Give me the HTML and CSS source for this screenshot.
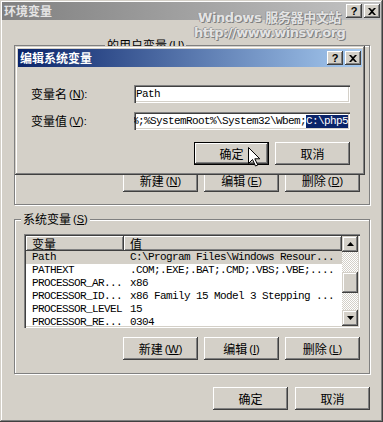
FILE: index.html
```html
<!DOCTYPE html>
<html>
<head>
<meta charset="utf-8">
<link rel="stylesheet" href="styles.css">
</head>
<body>
<div class="window">
  <div class="titlebar inactive">
    <span class="title">环境变量</span>
    <span class="tb-btns">
      <span class="tb-btn help">?</span>
      <span class="tb-btn"><svg width="8" height="7" viewBox="0 0 8 7"><path d="M0 0h2l2 2 2-2h2L5 3.5 8 7H6L4 5 2 7H0l3-3.5z" fill="#000"/></svg></span>
    </span>
  </div>
  <div class="content">
    <fieldset class="group user">
      <legend>的用户变量<span class="mn">(<u>U</u>)</span></legend>
      <div class="group-body">
        <div class="list blank"></div>
        <div class="btnrow">
          <button class="btn">新建<span class="mn">(<u>N</u>)</span></button>
          <button class="btn">编辑<span class="mn">(<u>E</u>)</span></button>
          <button class="btn">删除<span class="mn">(<u>D</u>)</span></button>
        </div>
      </div>
    </fieldset>
    <fieldset class="group sys">
      <legend>系统变量<span class="mn">(<u>S</u>)</span></legend>
      <div class="group-body">
        <div class="list">
          <div class="list-main">
            <div class="lv-head"><div class="hc c1">变量</div><div class="hc c2">值</div></div>
            <div class="lv-row sel"><span class="c1">Path</span><span class="c2">C:\Program Files\Windows Resour...</span></div>
            <div class="lv-row"><span class="c1">PATHEXT</span><span class="c2">.COM;.EXE;.BAT;.CMD;.VBS;.VBE;....</span></div>
            <div class="lv-row"><span class="c1">PROCESSOR_AR...</span><span class="c2">x86</span></div>
            <div class="lv-row"><span class="c1">PROCESSOR_ID...</span><span class="c2">x86 Family 15 Model 3 Stepping ...</span></div>
            <div class="lv-row"><span class="c1">PROCESSOR_LEVEL</span><span class="c2">15</span></div>
            <div class="lv-row"><span class="c1">PROCESSOR_RE...</span><span class="c2">0304</span></div>
          </div>
          <div class="vscroll">
            <div class="sb-btn"><svg width="7" height="4" viewBox="0 0 7 4"><path d="M3.5 0L7 4H0z" fill="#000"/></svg></div>
            <div class="sb-track"><div class="sb-thumb"></div></div>
            <div class="sb-btn"><svg width="7" height="4" viewBox="0 0 7 4"><path d="M0 0h7L3.5 4z" fill="#000"/></svg></div>
          </div>
        </div>
        <div class="btnrow">
          <button class="btn">新建<span class="mn">(<u>W</u>)</span></button>
          <button class="btn">编辑<span class="mn">(<u>I</u>)</span></button>
          <button class="btn">删除<span class="mn">(<u>L</u>)</span></button>
        </div>
      </div>
    </fieldset>
    <div class="dlg-btns">
      <button class="btn">确定</button>
      <button class="btn">取消</button>
    </div>
  </div>

  <div class="watermark">
    <div class="wm1">Windows 服务器中文站</div>
    <div class="wm2">http://www.winsvr.org</div>
  </div>

  <div class="modal">
    <div class="titlebar active">
      <span class="title">编辑系统变量</span>
      <span class="tb-btns">
        <span class="tb-btn help">?</span>
        <span class="tb-btn"><svg width="8" height="7" viewBox="0 0 8 7"><path d="M0 0h2l2 2 2-2h2L5 3.5 8 7H6L4 5 2 7H0l3-3.5z" fill="#000"/></svg></span>
      </span>
    </div>
    <div class="form">
      <div class="field">
        <span class="label">变量名<span class="mn">(<u>N</u>):</span></span>
        <div class="input"><span>Path</span></div>
      </div>
      <div class="field">
        <span class="label">变量值<span class="mn">(<u>V</u>):</span></span>
        <div class="input scrolled"><span>%SystemRoot%\system32;%SystemRoot%;%SystemRoot%\System32\Wbem;</span><span class="seltext">C:\php5</span></div>
      </div>
      <div class="modal-btns">
        <button class="btn default">确定</button>
        <button class="btn">取消</button>
      </div>
    </div>
  </div>

  <svg class="cursor" width="13" height="20" viewBox="0 0 13 20"><path d="M0.5 0.5V16.5L4.5 12.5L7.5 19L9.8 18L6.8 11.8H11.8Z" fill="#fff" stroke="#000" stroke-width="1" stroke-linejoin="miter"/></svg>
</div>
</body>
</html>
```
FILE: styles.css
```css
* { box-sizing: border-box; }
html, body { margin: 0; padding: 0; background: #d4d0c8; }
body {
  font-family: "Noto Sans CJK SC", "Liberation Sans", sans-serif;
  font-size: 12px;
  color: #000;
}
u { text-decoration: underline; text-underline-offset: 1px; }

.window {
  position: relative;
  width: 383px;
  height: 422px;
  background: #d4d0c8;
  padding: 2px;
  overflow: hidden;
  box-shadow: inset -1px -1px #404040, inset 1px 1px #d4d0c8, inset -2px -2px #808080, inset 2px 2px #fff;
}

.titlebar {
  height: 18px;
  display: flex;
  align-items: center;
  justify-content: space-between;
  padding: 0 1px 0 2px;
}
.titlebar.inactive { background: linear-gradient(to right, #808080, #c4c4c4); }
.titlebar.active { background: linear-gradient(to right, #0a246a, #a6caf0); }
.title {
  font-size: 12px;
  line-height: 14px;
  font-weight: bold;
  color: #fff;
}
.inactive .title { color: #e4e4e4; }

.tb-btns { display: flex; gap: 2px; }
.tb-btn {
  width: 16px;
  height: 14px;
  background: #d4d0c8;
  display: flex;
  align-items: center;
  justify-content: center;
  box-shadow: inset -1px -1px #404040, inset 1px 1px #fff, inset -2px -2px #808080, inset 2px 2px #d4d0c8;
}
.tb-btn.help {
  font-family: "Liberation Sans", sans-serif;
  font-weight: bold;
  font-size: 11px;
  line-height: 12px;
  padding-bottom: 1px;
}

.content { padding: 0 11px 0 12px; }

.group {
  margin: 0;
  padding: 0;
  min-width: 0;
  border: 1px solid #808080;
  box-shadow: 1px 1px 0 #fff, inset 1px 1px 0 #fff;
}
.group legend {
  padding: 0 2px;
  height: 14px;
  font-size: 12px;
  line-height: 14px;
  background: #d4d0c8;
  display: flex;
  align-items: center;
  white-space: nowrap;
}
.group.user { margin-top: 18px; }
.group.user legend { margin-left: 90px; }
.group.sys { margin-top: 7px; }
.group.sys legend { margin-left: 6px; }
.group-body { padding: 6px 9px 12px 9px; }
.sys .group-body { padding-top: 8px; padding-bottom: 13px; }

.mn {
  font-family: "Liberation Sans", sans-serif;
  font-size: 11px;
  line-height: 12px;
  margin-left: 2px;
}

.list {
  display: flex;
  background: #fff;
  padding: 2px;
  height: 94px;
  box-shadow: inset 1px 1px #808080, inset 2px 2px #404040, inset -1px -1px #fff, inset -2px -2px #d4d0c8;
}
.list.blank { height: 100px; }

.list-main { flex: 1; overflow: hidden; }
.lv-head { display: flex; height: 15px; }
.hc {
  background: #d4d0c8;
  height: 15px;
  font-size: 12px;
  line-height: 15px;
  padding-left: 6px;
  display: flex;
  align-items: center;
  box-shadow: inset -1px -1px #404040, inset 1px 1px #fff, inset -2px -2px #808080;
}
.hc.c1 { width: 98px; }
.hc.c2 { flex: 1; }
.lv-row {
  display: flex;
  height: 13px;
  line-height: 13px;
  font-family: "Liberation Mono", monospace;
  font-size: 11px;
  letter-spacing: -0.6px;
  white-space: nowrap;
}
.lv-row.sel { background: #d4d0c8; }
.lv-row .c1 { width: 98px; padding-left: 6px; flex: none; }
.lv-row .c2 { padding-left: 6px; }

.vscroll { width: 16px; display: flex; flex-direction: column; }
.sb-btn {
  width: 16px;
  height: 16px;
  background: #d4d0c8;
  display: flex;
  align-items: center;
  justify-content: center;
  box-shadow: inset -1px -1px #404040, inset 1px 1px #d4d0c8, inset -2px -2px #808080, inset 2px 2px #fff;
}
.sb-track {
  flex: 1;
  padding-top: 20px;
  background-image: repeating-conic-gradient(#fff 0% 25%, #d4d0c8 0% 50%);
  background-size: 2px 2px;
}
.sb-thumb {
  height: 21px;
  background: #d4d0c8;
  box-shadow: inset -1px -1px #404040, inset 1px 1px #d4d0c8, inset -2px -2px #808080, inset 2px 2px #fff;
}

.btnrow {
  display: flex;
  justify-content: flex-end;
  gap: 6px;
  margin-top: 11px;
}
.sys .btnrow { margin-top: 9px; }

.btn {
  width: 75px;
  height: 23px;
  margin: 0;
  padding: 0;
  border: 0;
  background: #d4d0c8;
  font-family: "Noto Sans CJK SC", "Liberation Sans", sans-serif;
  font-size: 12px;
  line-height: 14px;
  color: #000;
  display: flex;
  align-items: center;
  justify-content: center;
  box-shadow: inset -1px -1px #404040, inset 1px 1px #fff, inset -2px -2px #808080, inset 2px 2px #d4d0c8;
}
.btn.default {
  border: 1px solid #000;
  box-shadow: inset -1px -1px #404040, inset 1px 1px #fff, inset -2px -2px #808080;
}

.dlg-btns {
  display: flex;
  justify-content: flex-end;
  gap: 7px;
  margin-top: 13px;
}

.watermark {
  position: absolute;
  left: 194px;
  top: 10px;
  font-family: "DejaVu Sans", "Noto Sans CJK SC", sans-serif;
  font-weight: bold;
  color: rgba(240, 240, 240, 0.9);
  text-shadow: 1px 1px 0 #808080, -1px 0 0 #9a9a9a, 0 -1px 0 #a8a8a8;
  line-height: 15px;
  white-space: nowrap;
}
.wm1 { font-size: 13px; letter-spacing: -0.4px; padding-left: 4px; }
.wm2 { font-size: 13px; letter-spacing: -0.5px; }

.modal {
  position: absolute;
  left: 15px;
  top: 46px;
  width: 350px;
  height: 129px;
  background: #d4d0c8;
  padding: 3px;
  box-shadow: inset -1px -1px #404040, inset 1px 1px #d4d0c8, inset -2px -2px #808080, inset 2px 2px #fff;
}
.form { padding: 18px 12px 0 13px; }
.field { display: flex; align-items: center; height: 18px; }
.field + .field { margin-top: 9px; }
.label { width: 103px; flex: none; line-height: 14px; display: flex; align-items: center; }
.input {
  flex: 1;
  height: 18px;
  min-width: 0;
  background: #fff;
  padding: 0 2px 0 2px;
  display: flex;
  align-items: center;
  overflow: hidden;
  white-space: nowrap;
  font-family: "Liberation Mono", monospace;
  font-size: 11px;
  letter-spacing: -0.6px;
  line-height: 13px;
  box-shadow: inset 1px 1px #808080, inset 2px 2px #404040, inset -1px -1px #fff, inset -2px -2px #d4d0c8;
}
.input span { flex: none; }
.input.scrolled { justify-content: flex-end; }
.seltext { background: #0a246a; color: #fff; }
.modal-btns {
  display: flex;
  justify-content: flex-end;
  gap: 6px;
  margin-top: 12px;
}

.cursor {
  position: absolute;
  left: 248px;
  top: 147px;
}
```
